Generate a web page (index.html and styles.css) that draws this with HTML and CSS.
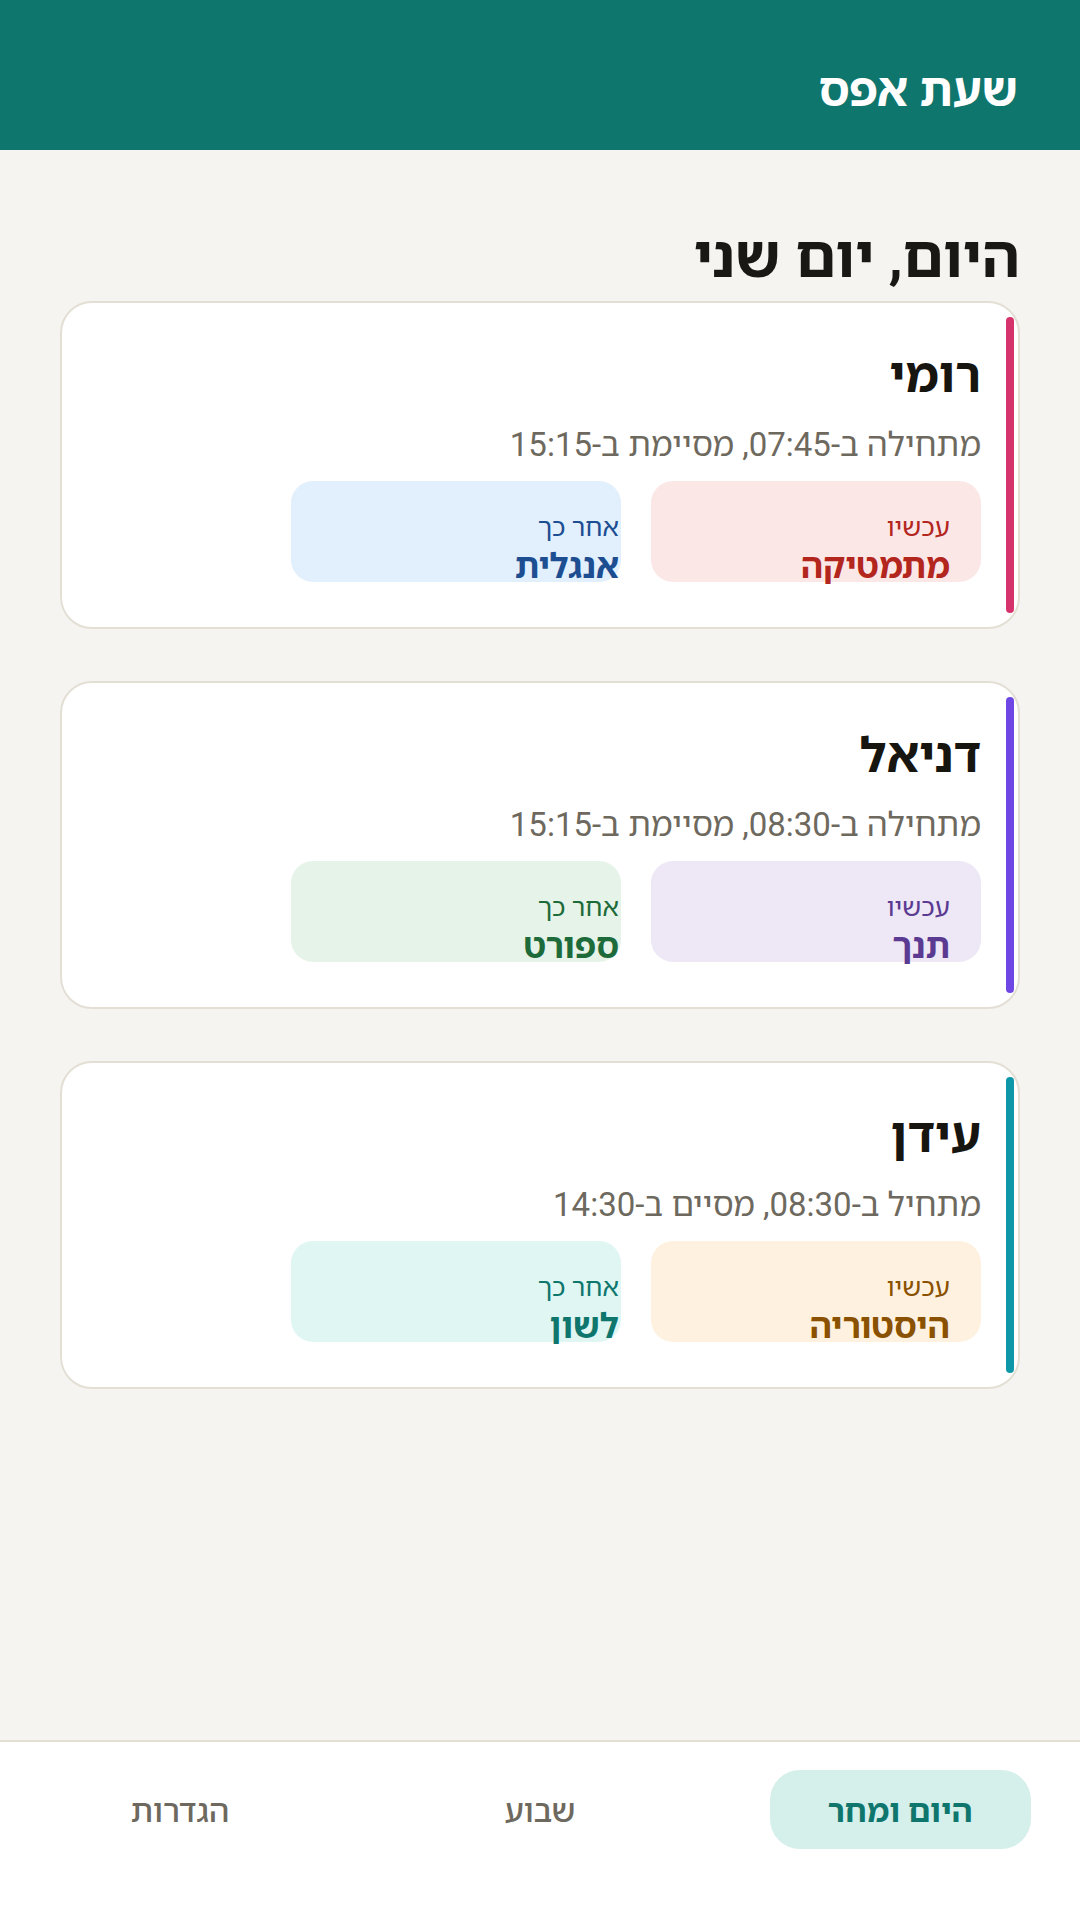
FILE: index.html
```html
<!DOCTYPE html>
<html lang="he" dir="rtl">
<head>
<meta charset="utf-8">
<title>שעת אפס</title>
<link rel="stylesheet" href="styles.css">
</head>
<body>
<div class="app">
  <header class="topbar">
    <h1 class="brand">שעת אפס</h1>
  </header>
  <main class="content">
    <h2 class="day-title">היום, יום שני</h2>

    <section class="card card--pink">
      <span class="accent"></span>
      <h3 class="kid">רומי</h3>
      <p class="hours">מתחילה ב-07:45, מסיימת ב-15:15</p>
      <div class="slots">
        <div class="slot slot--now tone-red">
          <span class="slot-label">עכשיו</span>
          <span class="slot-subject">מתמטיקה</span>
        </div>
        <div class="slot slot--next tone-blue">
          <span class="slot-label">אחר כך</span>
          <span class="slot-subject">אנגלית</span>
        </div>
      </div>
    </section>

    <section class="card card--purple">
      <span class="accent"></span>
      <h3 class="kid">דניאל</h3>
      <p class="hours">מתחילה ב-08:30, מסיימת ב-15:15</p>
      <div class="slots">
        <div class="slot slot--now tone-violet">
          <span class="slot-label">עכשיו</span>
          <span class="slot-subject">תנך</span>
        </div>
        <div class="slot slot--next tone-green">
          <span class="slot-label">אחר כך</span>
          <span class="slot-subject">ספורט</span>
        </div>
      </div>
    </section>

    <section class="card card--teal">
      <span class="accent"></span>
      <h3 class="kid">עידן</h3>
      <p class="hours">מתחיל ב-08:30, מסיים ב-14:30</p>
      <div class="slots">
        <div class="slot slot--now tone-amber">
          <span class="slot-label">עכשיו</span>
          <span class="slot-subject">היסטוריה</span>
        </div>
        <div class="slot slot--next tone-mint">
          <span class="slot-label">אחר כך</span>
          <span class="slot-subject">לשון</span>
        </div>
      </div>
    </section>
  </main>
  <nav class="tabbar">
    <div class="tab tab--active"><span class="tab-pill">היום ומחר</span></div>
    <div class="tab"><span class="tab-pill">שבוע</span></div>
    <div class="tab"><span class="tab-pill">הגדרות</span></div>
  </nav>
</div>
</body>
</html>
```

FILE: styles.css
```css
* {
  box-sizing: border-box;
}

html, body {
  margin: 0;
  padding: 0;
}

body {
  font-family: Roboto, "Noto Sans Hebrew", "Open Sans", "DejaVu Sans", sans-serif;
  background: #f5f4f0;
  color: #1a1814;
}

.app {
  width: 1080px;
  height: 1920px;
  display: flex;
  flex-direction: column;
  overflow: hidden;
}

.topbar {
  height: 150px;
  flex: 0 0 150px;
  background: #0f766e;
  padding: 63px 62px 0 62px;
}

.brand {
  margin: 0;
  font-size: 46px;
  line-height: 54px;
  font-weight: 700;
  color: #ffffff;
}

.content {
  flex: 1;
  padding: 0 60px;
}

.day-title {
  margin: 72px 0 0 0;
  font-size: 58px;
  line-height: 70px;
  font-weight: 700;
  color: #1a1814;
}

.card {
  position: relative;
  width: 960px;
  height: 328px;
  margin-top: 9px;
  background: #ffffff;
  border: 2px solid #e4dfd5;
  border-radius: 32px;
  padding: 42px 37px 0 40px;
}

.card + .card {
  margin-top: 52px;
}

.accent {
  position: absolute;
  top: 14px;
  bottom: 14px;
  right: 4px;
  width: 8px;
  border-radius: 4px;
}

.card--pink .accent { background: #d6336c; }
.card--purple .accent { background: #6e47e5; }
.card--teal .accent { background: #0e97a8; }

.kid {
  margin: 0;
  font-size: 48px;
  line-height: 62px;
  font-weight: 700;
  color: #171510;
}

.hours {
  margin: 18px 0 0 0;
  font-size: 33px;
  line-height: 40px;
  font-weight: 400;
  color: #6e695e;
}

.slots {
  display: flex;
  gap: 30px;
  margin-top: 16px;
}

.slot {
  width: 330px;
  height: 101px;
  border-radius: 22px;
  padding: 28px 31px 0 31px;
  display: flex;
  flex-direction: column;
  align-items: flex-start;
}

.slot--next {
  padding-right: 2px;
}

.slot-label {
  font-size: 26px;
  line-height: 36px;
  font-weight: 400;
}

.slot-subject {
  font-size: 34px;
  line-height: 42px;
  font-weight: 700;
}

.tone-red { background: #fce7e7; color: #b3261e; }
.tone-blue { background: #e2effd; color: #1d4e91; }
.tone-violet { background: #ede7f6; color: #5b3a92; }
.tone-green { background: #e6f3e9; color: #1d6b3a; }
.tone-amber { background: #fff1df; color: #8a5200; }
.tone-mint { background: #e0f6f3; color: #0f766e; }

.tabbar {
  height: 180px;
  flex: 0 0 180px;
  background: #ffffff;
  border-top: 2px solid #e4dfd5;
  display: grid;
  grid-template-columns: repeat(3, 1fr);
  align-items: start;
  padding-top: 28px;
}

.tab {
  display: flex;
  justify-content: center;
}

.tab-pill {
  width: 261px;
  height: 79px;
  border-radius: 30px;
  display: flex;
  align-items: center;
  justify-content: center;
  font-size: 32px;
  font-weight: 500;
  color: #6e695e;
}

.tab--active .tab-pill {
  background: #d5efea;
  color: #0f766e;
  font-weight: 700;
}
```
